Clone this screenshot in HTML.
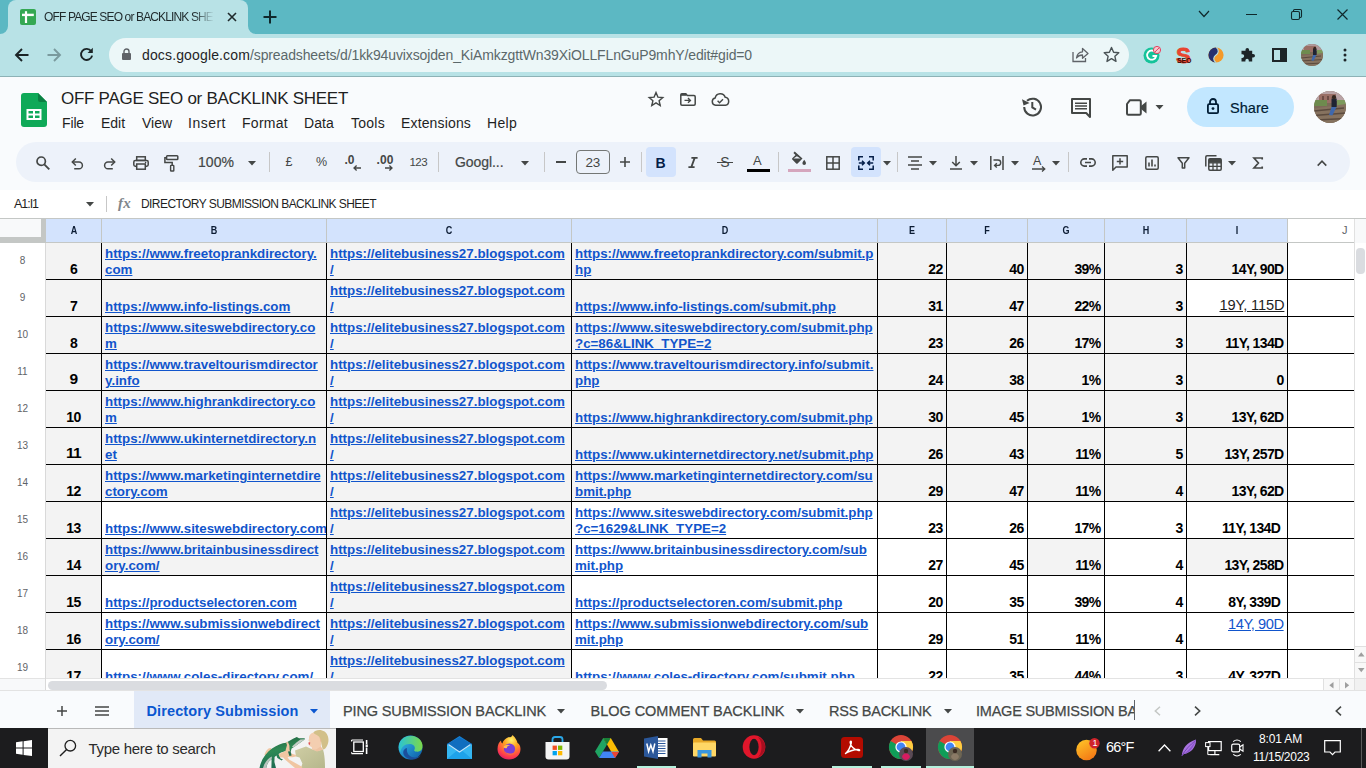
<!DOCTYPE html>
<html lang="en"><head><meta charset="utf-8"><title>OFF PAGE SEO or BACKLINK SHEET</title>
<style>
html,body{margin:0;padding:0;}
body{width:1366px;height:768px;overflow:hidden;position:relative;background:#fff;font-family:"Liberation Sans",sans-serif;}
.b{position:absolute;box-sizing:border-box;}
.t{position:absolute;white-space:pre;}
svg{overflow:visible;display:block}
.grid .c{position:absolute;height:36px;box-sizing:border-box;display:flex;align-items:flex-end;font-size:13.33px;line-height:16px;font-weight:bold;color:#000;white-space:pre;overflow:hidden;padding:0 4px 1px 3px;}
.grid .c.top{align-items:flex-start;padding-top:3px;}
.grid .ca{justify-content:center;padding-left:0;padding-right:0;font-size:14px;letter-spacing:-0.6px;padding-bottom:2px;}
.grid .cn{justify-content:flex-end;font-size:14px;letter-spacing:-0.6px;padding-right:3.4px;padding-bottom:2px;}
.grid .lk{color:#1155cc;text-decoration:underline;}
.grid .u1{font-weight:normal;font-size:14.67px;text-decoration:underline;color:#1f1f1f;letter-spacing:-0.15px;position:relative;top:-1.5px;left:0.8px;}
.grid .u2{font-weight:normal;font-size:14.67px;text-decoration:underline;color:#1155cc;letter-spacing:-0.45px;}
.grid .rn{position:absolute;left:0;width:45px;text-align:center;font-size:10px;line-height:14px;color:#5f6368;}
.grid .hb{position:absolute;left:46px;width:1308px;height:1px;background:#000;z-index:3;}
.grid .vb{position:absolute;top:0;width:1px;height:435px;background:#000;z-index:3;}
</style></head>
<body>
<!-- p_chrome -->
<div class="b" style="left:0px;top:0px;width:1366px;height:34px;background:#5cb8c3;"></div>
<div class="b" style="left:0px;top:34px;width:1366px;height:42px;background:#b8e2e6;"></div>
<div class="b" style="left:0px;top:76px;width:1366px;height:1px;background:#8db2b6;"></div>
<div class="b" style="left:8px;top:0px;width:240px;height:34px;background:#b8e2e6;border-radius:8px 8px 0 0;"></div>
<svg class="b" style="left:0px;top:26px;" width="8" height="8" viewBox="0 0 8 8"><path d="M0 8 H8 V0 A8 8 0 0 1 0 8Z" fill="#b8e2e6"/></svg>
<svg class="b" style="left:248px;top:26px;" width="8" height="8" viewBox="0 0 8 8"><path d="M8 8 H0 V0 A8 8 0 0 0 8 8Z" fill="#b8e2e6"/></svg>
<svg class="b" style="left:20px;top:9px;" width="16" height="16" viewBox="0 0 16 16"><rect x="0" y="0" width="16" height="16" rx="2" fill="#34a853"/><rect x="4.9" y="2.2" width="2.2" height="11.8" fill="#fff"/><rect x="2" y="4.7" width="11.8" height="2.4" fill="#fff"/></svg>
<div class="t " style="left:44px;top:8.5px;font-size:12px;line-height:17px;color:#1f2a2c;letter-spacing:-0.863px;-webkit-mask-image:linear-gradient(90deg,#000 150px,transparent 170px);mask-image:linear-gradient(90deg,#000 150px,transparent 170px);">OFF PAGE SEO or BACKLINK SHE</div>
<svg class="b" style="left:227px;top:12px;" width="10" height="10" viewBox="0 0 10 10"><path d="M1 1 L9 9 M9 1 L1 9" stroke="#1f2a2c" stroke-width="1.6" fill="none"/></svg>
<svg class="b" style="left:263px;top:10px;" width="14" height="14" viewBox="0 0 14 14"><path d="M7 0.5 V13.5 M0.5 7 H13.5" stroke="#10282b" stroke-width="2" fill="none"/></svg>
<svg class="b" style="left:1198px;top:10px;" width="12" height="8" viewBox="0 0 12 8"><path d="M1 1 L6 6.5 L11 1" stroke="#10282b" stroke-width="1.2" fill="none"/></svg>
<div class="b" style="left:1246px;top:14px;width:11px;height:1px;background:#10282b;"></div>
<svg class="b" style="left:1291px;top:9px;" width="11" height="11" viewBox="0 0 11 11"><rect x="0.5" y="2.5" width="8" height="8" rx="1.5" fill="none" stroke="#10282b" stroke-width="1.1"/><path d="M2.5 2.5 V1.7 Q2.5 0.5 3.7 0.5 H9.3 Q10.5 0.5 10.5 1.7 V7.3 Q10.5 8.5 9.3 8.5 H8.5" fill="none" stroke="#10282b" stroke-width="1.1"/></svg>
<svg class="b" style="left:1337px;top:9px;" width="11" height="11" viewBox="0 0 11 11"><path d="M0.5 0.5 L10.5 10.5 M10.5 0.5 L0.5 10.5" stroke="#10282b" stroke-width="1.2" fill="none"/></svg>
<svg class="b" style="left:15px;top:48px;" width="14" height="14" viewBox="0 0 14 14"><path d="M13.5 7 H1.5 M7 1 L1 7 L7 13" stroke="#1b2426" stroke-width="1.9" fill="none"/></svg>
<svg class="b" style="left:47px;top:48px;" width="14" height="14" viewBox="0 0 14 14"><path d="M0.5 7 H12.5 M7 1 L13 7 L7 13" stroke="#7a9a9e" stroke-width="1.9" fill="none"/></svg>
<svg class="b" style="left:79px;top:47px;" width="15" height="15" viewBox="0 0 15 15"><path d="M12.2 4.2 A5.6 5.6 0 1 0 13.1 8.6" stroke="#1b2426" stroke-width="1.9" fill="none"/><path d="M13.8 0.8 V6 H8.6 Z" fill="#1b2426"/></svg>
<div class="b" style="left:109px;top:38px;width:1020px;height:34px;background:#ecf7f8;border-radius:17px;"></div>
<svg class="b" style="left:122px;top:48px;" width="9" height="12" viewBox="0 0 9 12"><rect x="0" y="5" width="9" height="7" rx="1" fill="#5f6368"/><path d="M2 5.5 V3.5 A2.5 2.5 0 0 1 7 3.5 V5.5" stroke="#5f6368" stroke-width="1.4" fill="none"/></svg>
<div class="t " style="left:142px;top:45.0px;font-size:14px;line-height:20px;color:#1f2426;letter-spacing:0.144px;">docs.google.com</div>
<div class="t " style="left:250px;top:45.0px;font-size:14px;line-height:20px;color:#5b686a;letter-spacing:-0.125px;">/spreadsheets/d/1kk94uvixsojden_KiAmkzgttWn39XiOLLFLnGuP9mhY/edit#gid=0</div>
<svg class="b" style="left:1072px;top:46px;" width="17" height="17" viewBox="0 0 17 17"><path d="M1 6 V15.5 H13.5 V12" stroke="#5f6368" stroke-width="1.3" fill="none"/><path d="M4.5 12 C5 8 7.5 6 10.5 5.8 V2.5 L16 7.5 L10.5 12.3 V9 C8 9 6 9.8 4.5 12Z" stroke="#5f6368" stroke-width="1.3" fill="none" stroke-linejoin="round"/></svg>
<svg class="b" style="left:1103px;top:46px;" width="17" height="17" viewBox="0 0 17 17"><path d="M8.5 1.5 L10.6 6.3 L15.8 6.8 L11.9 10.3 L13 15.4 L8.5 12.7 L4 15.4 L5.1 10.3 L1.2 6.8 L6.4 6.3 Z" stroke="#4a5356" stroke-width="1.4" fill="none" stroke-linejoin="round"/></svg>
<svg class="b" style="left:1143px;top:46px;" width="18" height="18" viewBox="0 0 18 18"><circle cx="8.5" cy="9.5" r="8" fill="#15c39a"/><path d="M12.5 6.5 A4.6 4.6 0 1 0 13.2 10 H9.5" stroke="#fff" stroke-width="1.8" fill="none"/><circle cx="14" cy="4" r="3.6" fill="#f6c9cf" stroke="#e5405e" stroke-width="1"/><path d="M11.6 6.3 L16.3 1.7" stroke="#e5405e" stroke-width="1"/></svg>
<div class="t" style="left:1176px;top:43px;font-size:22px;line-height:26px;-webkit-text-stroke:0.8px #e8452f;font-weight:bold;color:#e8452f;letter-spacing:0">S</div>
<div class="t" style="left:1177px;top:57px;font-size:7px;line-height:8px;font-weight:bold;color:#3b0d07;letter-spacing:-0.2px">SEO</div>
<svg class="b" style="left:1208px;top:47px;" width="16" height="16" viewBox="0 0 16 16"><circle cx="8" cy="8" r="7.6" fill="#f49a2a"/><path d="M8 0.4 A7.6 7.6 0 0 0 8 15.6 C4.5 13.5 5.5 9.5 8 8 C10.5 6.5 11.5 2.5 8 0.4Z" fill="#26306e"/><path d="M8 0.4 C11.5 2.5 10.5 6.5 8 8 C5.5 9.5 4.5 13.5 8 15.6" stroke="#b8e2e6" stroke-width="1.1" fill="none"/></svg>
<svg class="b" style="left:1239px;top:47px;" width="17" height="17" viewBox="0 0 17 17"><path d="M6.5 2.8 A1.8 1.8 0 0 1 10.1 2.8 V3.8 H13.2 V7 H14.2 A1.8 1.8 0 0 1 14.2 10.6 H13.2 V14.5 H9.8 V13.4 A1.7 1.7 0 0 0 6.4 13.4 V14.5 H2.5 V10.9 H3.4 A1.8 1.8 0 0 0 3.4 7.3 H2.5 V3.8 H6.5Z" fill="#1d2528"/></svg>
<svg class="b" style="left:1272px;top:48px;" width="15" height="14" viewBox="0 0 15 14"><rect x="1" y="1" width="13" height="12" fill="none" stroke="#1d2528" stroke-width="2"/><rect x="8" y="1" width="6" height="12" fill="#1d2528"/></svg>
<svg class="b" style="left:1301px;top:44px;" width="22" height="22" viewBox="0 0 22 22"><defs><clipPath id="av1"><circle cx="11" cy="11" r="11"/></clipPath></defs><g clip-path="url(#av1)"><rect width="22" height="22" fill="#7c6a58"/><rect width="22" height="7" fill="#b0989a"/><rect x="3" y="2" width="12" height="6" fill="#9a6f66"/><rect x="0" y="6" width="9" height="4" fill="#6e8b4e"/><rect x="16" y="6" width="6" height="4" fill="#7d9a5c"/><path d="M0 12 L22 9 V22 H0Z" fill="#86725f"/><path d="M0 14 L20 12 M0 17 L22 15.5 M2 20 L22 19" stroke="#5b4a3e" stroke-width="1"/><rect x="12" y="5" width="3.6" height="6" fill="#1f2433"/><circle cx="13.8" cy="4.2" r="1.5" fill="#33261f"/><path d="M12 11 L10.4 16.5 L12.6 16.8 L15.4 11Z" fill="#3f68ad"/></g></svg>
<svg class="b" style="left:1342.5px;top:48px;" width="4" height="14" viewBox="0 0 4 14"><circle cx="2" cy="2" r="1.5" fill="#1d2528"/><circle cx="2" cy="7" r="1.5" fill="#1d2528"/><circle cx="2" cy="12" r="1.5" fill="#1d2528"/></svg>
<!-- p_header -->
<div class="b" style="left:0px;top:77px;width:1366px;height:113px;background:#f9fbfd;"></div>
<svg class="b" style="left:21px;top:93px;" width="26" height="34" viewBox="0 0 26 34"><path d="M3 0 H17 L26 9 V31 Q26 34 23 34 H3 Q0 34 0 31 V3 Q0 0 3 0Z" fill="#0fa958"/><path d="M17 0 L26 9 H19 Q17 9 17 7Z" fill="#0b8043"/><path d="M5.5 16 H20.5 V27 H5.5Z M7.5 18 V20.5 H12 V18Z M14 18 V20.5 H18.5 V18Z M7.5 22.5 V25 H12 V22.5Z M14 22.5 V25 H18.5 V22.5Z" fill="#fff" fill-rule="evenodd"/></svg>
<div class="t " style="left:61px;top:86.6px;font-size:17px;line-height:24px;color:#1f1f1f;letter-spacing:-0.279px;">OFF PAGE SEO or BACKLINK SHEET</div>
<div class="t " style="left:62px;top:113.0px;font-size:14px;line-height:20px;color:#1f1f1f;letter-spacing:-0.140px;">File</div>
<div class="t " style="left:101px;top:113.0px;font-size:14px;line-height:20px;color:#1f1f1f;letter-spacing:-0.031px;">Edit</div>
<div class="t " style="left:142px;top:113.0px;font-size:14px;line-height:20px;color:#1f1f1f;letter-spacing:-0.023px;">View</div>
<div class="t " style="left:188px;top:113.0px;font-size:14px;line-height:20px;color:#1f1f1f;letter-spacing:0.498px;">Insert</div>
<div class="t " style="left:242px;top:113.0px;font-size:14px;line-height:20px;color:#1f1f1f;letter-spacing:0.277px;">Format</div>
<div class="t " style="left:304px;top:113.0px;font-size:14px;line-height:20px;color:#1f1f1f;letter-spacing:0.107px;">Data</div>
<div class="t " style="left:351px;top:113.0px;font-size:14px;line-height:20px;color:#1f1f1f;letter-spacing:0.263px;">Tools</div>
<div class="t " style="left:401px;top:113.0px;font-size:14px;line-height:20px;color:#1f1f1f;letter-spacing:0.152px;">Extensions</div>
<div class="t " style="left:487px;top:113.0px;font-size:14px;line-height:20px;color:#1f1f1f;letter-spacing:0.302px;">Help</div>
<svg class="b" style="left:648px;top:91px;" width="16" height="16" viewBox="0 0 16 16"><path d="M8 1.6 L9.9 6.1 L14.8 6.5 L11.1 9.7 L12.2 14.5 L8 11.9 L3.8 14.5 L4.9 9.7 L1.2 6.5 L6.1 6.1 Z" stroke="#444746" stroke-width="1.4" fill="none" stroke-linejoin="miter"/></svg>
<svg class="b" style="left:680px;top:93px;" width="16" height="13" viewBox="0 0 16 13"><path d="M0.8 2 Q0.8 0.8 2 0.8 H5.8 L7.3 2.6 H14 Q15.2 2.6 15.2 3.8 V11 Q15.2 12.2 14 12.2 H2 Q0.8 12.2 0.8 11Z" stroke="#444746" stroke-width="1.5" fill="none"/><rect x="0.8" y="0.8" width="5.5" height="2" fill="#444746"/><path d="M4.5 7.4 H9.5 M8 5 L10.4 7.4 L8 9.8" stroke="#444746" stroke-width="1.4" fill="none"/></svg>
<svg class="b" style="left:711px;top:93px;" width="19" height="13" viewBox="0 0 19 13"><path d="M4.6 12.2 A3.7 3.7 0 0 1 4.2 4.9 A5.2 5.2 0 0 1 14.2 4.3 A4 4 0 0 1 14.4 12.2Z" stroke="#444746" stroke-width="1.5" fill="none"/><path d="M6.6 7.8 L8.5 9.7 L12 6.2" stroke="#444746" stroke-width="1.4" fill="none"/></svg>
<svg class="b" style="left:1021px;top:96px;" width="22" height="22" viewBox="0 0 22 22"><path d="M3.2 11 A8.4 8.4 0 1 0 6 4.8" stroke="#444746" stroke-width="2" fill="none"/><path d="M1 3.2 L2.6 9.6 L8.6 7Z" fill="#444746"/><path d="M11.3 6 V11.4 L15 13.6" stroke="#444746" stroke-width="2" fill="none"/></svg>
<svg class="b" style="left:1071px;top:98px;" width="20" height="20" viewBox="0 0 20 20"><path d="M1 1 H19 V19 L15.2 15 H1Z" stroke="#444746" stroke-width="2" fill="none" stroke-linejoin="round"/><path d="M4 5.2 H16 M4 8 H16 M4 10.8 H16" stroke="#444746" stroke-width="1.6"/></svg>
<svg class="b" style="left:1126px;top:99px;" width="21" height="17" viewBox="0 0 21 17"><path d="M4 1.2 H13.5 Q14.8 1.2 14.8 2.5 V14.5 Q14.8 15.8 13.5 15.8 H2.2 Q1 15.8 1 14.5 V5 Z" stroke="#444746" stroke-width="2" fill="none" stroke-linejoin="round"/><path d="M15 7 L20.5 2.5 V14.5 L15 10Z" fill="#444746"/></svg>
<svg class="b" style="left:1155px;top:105px;" width="9" height="5" viewBox="0 0 9 5"><path d="M0.5 0 H8.5 L4.5 4.5Z" fill="#444746"/></svg>
<div class="b" style="left:1187px;top:87px;width:107px;height:40px;background:#c2e7ff;border-radius:20px;"></div>
<svg class="b" style="left:1207px;top:98px;" width="12" height="16" viewBox="0 0 12 16"><rect x="0.9" y="6.2" width="10.2" height="8.9" rx="1.2" stroke="#001d35" stroke-width="1.8" fill="none"/><path d="M3 6 V4 A3 3 0 0 1 9 4 V6" stroke="#001d35" stroke-width="1.8" fill="none"/><circle cx="6" cy="10.6" r="1.4" fill="#001d35"/></svg>
<div class="t " style="left:1230px;top:97.5px;font-size:14.5px;line-height:20px;color:#001d35;letter-spacing:0.061px;-webkit-text-stroke:0.2px #001d35;">Share</div>
<svg class="b" style="left:1314px;top:91px;" width="32" height="32" viewBox="0 0 32 32"><defs><clipPath id="av2"><circle cx="16" cy="16" r="16"/></clipPath></defs><g clip-path="url(#av2)"><rect width="32" height="32" fill="#7c6a58"/><rect width="32" height="10" fill="#b9a3a6"/><rect x="5" y="3" width="17" height="9" fill="#9a6f66"/><rect x="8" y="5" width="2" height="4" fill="#6e4c46"/><rect x="13" y="5" width="2" height="4" fill="#6e4c46"/><rect x="0" y="9" width="13" height="6" fill="#6e8b4e"/><rect x="23" y="9" width="9" height="6" fill="#7d9a5c"/><path d="M0 17.5 L32 13 V32 H0Z" fill="#86725f"/><path d="M0 20 L30 17 M0 24.5 L32 22 M2 29 L32 27.5" stroke="#5b4a3e" stroke-width="1.4"/><rect x="17.5" y="7.5" width="5.2" height="8.6" fill="#1f2433"/><circle cx="20" cy="6.2" r="2.1" fill="#33261f"/><path d="M17.5 16 L15 24 L18.4 24.5 L22.5 16Z" fill="#3f68ad"/></g></svg>
<!-- p_toolbar -->
<div class="b" style="left:16px;top:142px;width:1334px;height:40px;background:#edf2fa;border-radius:20px;"></div>
<svg class="b" style="left:36px;top:156px;" width="14" height="14" viewBox="0 0 14 14"><circle cx="5.2" cy="5.2" r="4.2" stroke="#444746" stroke-width="1.7" fill="none"/><path d="M8.3 8.3 L13.3 13.3" stroke="#444746" stroke-width="1.9"/></svg>
<svg class="b" style="left:71px;top:157px;" width="13" height="13" viewBox="0 0 13 13"><path d="M1.5 5 H8 A3.4 3.4 0 0 1 8 11.8 H3.2" stroke="#444746" stroke-width="1.5" fill="none"/><path d="M4.8 1.5 L1.3 5 L4.8 8.5" stroke="#444746" stroke-width="1.5" fill="none"/></svg>
<svg class="b" style="left:103px;top:157px;" width="13" height="13" viewBox="0 0 13 13"><path d="M11.5 5 H5 A3.4 3.4 0 0 0 5 11.8 H9.8" stroke="#444746" stroke-width="1.5" fill="none"/><path d="M8.2 1.5 L11.7 5 L8.2 8.5" stroke="#444746" stroke-width="1.5" fill="none"/></svg>
<svg class="b" style="left:133px;top:156px;" width="16" height="14" viewBox="0 0 16 14"><rect x="3.7" y="0.8" width="8.6" height="3.6" stroke="#444746" stroke-width="1.5" fill="none"/><path d="M3.5 10.2 H2.2 Q0.8 10.2 0.8 8.8 V6 Q0.8 4.5 2.3 4.5 H13.7 Q15.2 4.5 15.2 6 V8.8 Q15.2 10.2 13.8 10.2 H12.5" stroke="#444746" stroke-width="1.5" fill="none"/><rect x="3.7" y="8" width="8.6" height="5.2" stroke="#444746" stroke-width="1.5" fill="none"/><circle cx="12.6" cy="6.6" r="0.8" fill="#444746"/></svg>
<svg class="b" style="left:164px;top:155px;" width="15" height="17" viewBox="0 0 15 17"><rect x="2.6" y="0.8" width="11.2" height="3.8" rx="0.8" stroke="#444746" stroke-width="1.5" fill="none"/><path d="M2.6 2.7 H0.9 V7.6 H8.2 V10.4" stroke="#444746" stroke-width="1.5" fill="none"/><rect x="6.6" y="10.4" width="3.2" height="5.6" rx="0.6" stroke="#444746" stroke-width="1.4" fill="none"/></svg>
<div class="t " style="left:198px;top:152.0px;font-size:14px;line-height:20px;color:#444746;letter-spacing:0.048px;-webkit-text-stroke:0.2px #444746;">100%</div>
<svg class="b" style="left:248px;top:161px;" width="8" height="4.5" viewBox="0 0 8 4.5"><path d="M0 0 H8 L4 4.5Z" fill="#444746"/></svg>
<div class="b" style="left:269px;top:152px;width:1px;height:20px;background:#c7c7c7;"></div>
<div class="t " style="left:285.5px;top:152.5px;font-size:12.5px;line-height:18px;color:#444746;letter-spacing:-0.452px;">£</div>
<div class="t " style="left:316px;top:152.5px;font-size:12.5px;line-height:18px;color:#444746;letter-spacing:-0.114px;">%</div>
<div class="t " style="left:344.5px;top:152.0px;font-size:12px;line-height:17px;color:#444746;letter-spacing:-0.004px;font-weight:bold;">.0</div>
<svg class="b" style="left:353px;top:165px;" width="8" height="6" viewBox="0 0 8 6"><path d="M8 3 H1.2 M3.6 0.5 L1 3 L3.6 5.5" stroke="#444746" stroke-width="1.3" fill="none"/></svg>
<div class="t " style="left:376.5px;top:152.0px;font-size:12px;line-height:17px;color:#444746;letter-spacing:0.106px;font-weight:bold;">.00</div>
<svg class="b" style="left:385px;top:165px;" width="8" height="6" viewBox="0 0 8 6"><path d="M0 3 H6.8 M4.4 0.5 L7 3 L4.4 5.5" stroke="#444746" stroke-width="1.3" fill="none"/></svg>
<div class="t " style="left:409.5px;top:154.0px;font-size:11.5px;line-height:16px;color:#444746;letter-spacing:-0.562px;">123</div>
<div class="b" style="left:438px;top:152px;width:1px;height:20px;background:#c7c7c7;"></div>
<div class="t " style="left:455px;top:151.5px;font-size:14px;line-height:20px;color:#444746;letter-spacing:-0.066px;-webkit-text-stroke:0.2px #444746;">Googl...</div>
<svg class="b" style="left:521px;top:161px;" width="8" height="4.5" viewBox="0 0 8 4.5"><path d="M0 0 H8 L4 4.5Z" fill="#444746"/></svg>
<div class="b" style="left:544px;top:152px;width:1px;height:20px;background:#c7c7c7;"></div>
<div class="b" style="left:556px;top:161px;width:10px;height:1.6px;background:#444746;"></div>
<div class="b" style="left:576px;top:150px;width:34px;height:24px;border:1px solid #747775;border-radius:4px;"></div>
<div class="t " style="left:585.5px;top:152.5px;font-size:13.5px;line-height:19px;color:#444746;letter-spacing:-0.258px;">23</div>
<svg class="b" style="left:620px;top:157px;" width="10" height="10" viewBox="0 0 10 10"><path d="M5 0 V10 M0 5 H10" stroke="#444746" stroke-width="1.6"/></svg>
<div class="b" style="left:641px;top:152px;width:1px;height:20px;background:#c7c7c7;"></div>
<div class="b" style="left:646px;top:147px;width:30px;height:30px;background:#d3e3fd;border-radius:4px;"></div>
<div class="t " style="left:655.5px;top:152.5px;font-size:14px;line-height:20px;color:#041e49;letter-spacing:-0.610px;font-weight:bold;">B</div>
<svg class="b" style="left:688px;top:157px;" width="10" height="11" viewBox="0 0 10 11"><path d="M3.4 0.9 H9.6 M0.4 10.1 H6.6 M6.7 0.9 L3.3 10.1" stroke="#444746" stroke-width="1.8" fill="none"/></svg>
<div class="t " style="left:720.3px;top:152.3px;font-size:14px;line-height:20px;color:#444746;letter-spacing:-0.038px;">S</div>
<div class="b" style="left:717px;top:161.5px;width:16px;height:1.5px;background:#444746;"></div>
<div class="t " style="left:753px;top:151.5px;font-size:13px;line-height:18px;color:#444746;letter-spacing:0.929px;">A</div>
<div class="b" style="left:747px;top:168.5px;width:23px;height:3.2px;background:#000;"></div>
<div class="b" style="left:778px;top:152px;width:1px;height:20px;background:#c7c7c7;"></div>
<svg class="b" style="left:791px;top:150px;" width="16" height="16" viewBox="0 0 16 16"><path d="M3.2 2.6 L1.9 3.9 L4 6 L0.8 9.2 Q0.2 9.9 0.8 10.6 L4.7 14.5 Q5.4 15.1 6.1 14.5 L11 9.6 Z M5.4 7.2 L9 9.6 H1.9Z" fill="#444746" fill-rule="evenodd" transform="translate(0.5,-1)"/><path d="M13.2 9.8 Q15 12.2 15 13.2 A1.8 1.8 0 0 1 11.4 13.2 Q11.4 12.2 13.2 9.8Z" fill="#444746"/></svg>
<div class="b" style="left:788px;top:168.5px;width:23px;height:3.2px;background:#d5a6bd;"></div>
<svg class="b" style="left:826px;top:156px;" width="14" height="14" viewBox="0 0 14 14"><rect x="0.8" y="0.8" width="12.4" height="12.4" stroke="#444746" stroke-width="1.5" fill="none"/><path d="M7 0.8 V13.2 M0.8 7 H13.2" stroke="#444746" stroke-width="1.5"/></svg>
<div class="b" style="left:851px;top:147px;width:30px;height:30px;background:#d3e3fd;border-radius:4px;"></div>
<svg class="b" style="left:858px;top:156px;" width="16" height="14" viewBox="0 0 16 14"><path d="M5 0.8 H0.8 V4.6 M0.8 9.4 V13.2 H5 M11 0.8 H15.2 V4.6 M15.2 9.4 V13.2 H11" stroke="#041e49" stroke-width="1.5" fill="none"/><path d="M0.8 7 H6 M4 4.7 L6.3 7 L4 9.3 M15.2 7 H10 M12 4.7 L9.7 7 L12 9.3" stroke="#041e49" stroke-width="1.5" fill="none"/></svg>
<svg class="b" style="left:883px;top:161px;" width="8" height="4.5" viewBox="0 0 8 4.5"><path d="M0 0 H8 L4 4.5Z" fill="#444746"/></svg>
<div class="b" style="left:897px;top:152px;width:1px;height:20px;background:#c7c7c7;"></div>
<svg class="b" style="left:908px;top:156px;" width="14" height="14" viewBox="0 0 14 14"><path d="M0 1 H14 M3 5 H11 M0 9 H14 M3 13 H11" stroke="#444746" stroke-width="1.5"/></svg>
<svg class="b" style="left:929px;top:161px;" width="8" height="4.5" viewBox="0 0 8 4.5"><path d="M0 0 H8 L4 4.5Z" fill="#444746"/></svg>
<svg class="b" style="left:950px;top:156px;" width="12" height="14" viewBox="0 0 12 14"><path d="M0 13 H12 M6 0 V9.5 M2.2 6 L6 9.8 L9.8 6" stroke="#444746" stroke-width="1.5" fill="none"/></svg>
<svg class="b" style="left:970px;top:161px;" width="8" height="4.5" viewBox="0 0 8 4.5"><path d="M0 0 H8 L4 4.5Z" fill="#444746"/></svg>
<svg class="b" style="left:990px;top:156px;" width="14" height="14" viewBox="0 0 14 14"><path d="M0.8 0 V14 M13 0 V14" stroke="#444746" stroke-width="1.5"/><path d="M3.5 4 H8 A2.6 2.6 0 0 1 8 9.4 H5 M6.8 7.2 L4.6 9.4 L6.8 11.6" stroke="#444746" stroke-width="1.4" fill="none"/></svg>
<svg class="b" style="left:1011px;top:161px;" width="8" height="4.5" viewBox="0 0 8 4.5"><path d="M0 0 H8 L4 4.5Z" fill="#444746"/></svg>
<div class="t " style="left:1033px;top:151.5px;font-size:12.5px;line-height:18px;color:#444746;letter-spacing:0.662px;">A</div>
<svg class="b" style="left:1032px;top:166px;" width="14" height="6" viewBox="0 0 14 6"><path d="M0 3 H12.5 M10 0.4 L12.8 3 L10 5.6" stroke="#444746" stroke-width="1.3" fill="none"/></svg>
<svg class="b" style="left:1052px;top:161px;" width="8" height="4.5" viewBox="0 0 8 4.5"><path d="M0 0 H8 L4 4.5Z" fill="#444746"/></svg>
<div class="b" style="left:1068px;top:152px;width:1px;height:20px;background:#c7c7c7;"></div>
<svg class="b" style="left:1080px;top:158px;" width="16" height="9" viewBox="0 0 16 9"><path d="M7 0.9 H4.4 A3.6 3.6 0 0 0 4.4 8.1 H7 M9 0.9 H11.6 A3.6 3.6 0 0 1 11.6 8.1 H9 M5 4.5 H11" stroke="#444746" stroke-width="1.6" fill="none"/></svg>
<svg class="b" style="left:1112px;top:155px;" width="16" height="16" viewBox="0 0 16 16"><path d="M0.8 0.8 H15.2 V12 H4 L0.8 15.2Z" stroke="#444746" stroke-width="1.5" fill="none" stroke-linejoin="round"/><path d="M8 3.2 V9.6 M4.8 6.4 H11.2" stroke="#444746" stroke-width="1.5"/></svg>
<svg class="b" style="left:1145px;top:156px;" width="14" height="14" viewBox="0 0 14 14"><rect x="0.8" y="0.8" width="12.4" height="12.4" rx="1.2" stroke="#444746" stroke-width="1.5" fill="none"/><path d="M4 10.5 V6.5 M7 10.5 V3.6 M10 10.5 V8.6" stroke="#444746" stroke-width="1.6"/></svg>
<svg class="b" style="left:1177px;top:157px;" width="13" height="12" viewBox="0 0 13 12"><path d="M1 0.8 H12 L7.7 6.2 V11 H5.3 V6.2Z" stroke="#444746" stroke-width="1.5" fill="none" stroke-linejoin="round"/></svg>
<svg class="b" style="left:1205px;top:155px;" width="17" height="16" viewBox="0 0 17 16"><path d="M0.8 11.5 V2 Q0.8 0.8 2 0.8 H11.5" stroke="#444746" stroke-width="1.5" fill="none"/><rect x="3.8" y="3.8" width="12.4" height="11.4" rx="1.2" stroke="#444746" stroke-width="1.5" fill="none"/><path d="M3.8 7.8 H16.2 M3.8 11.4 H16.2 M8 7.8 V15.2 M12 7.8 V15.2" stroke="#444746" stroke-width="1.3"/><rect x="3.8" y="3.8" width="12.4" height="4" fill="#444746"/></svg>
<svg class="b" style="left:1228px;top:161px;" width="8" height="4.5" viewBox="0 0 8 4.5"><path d="M0 0 H8 L4 4.5Z" fill="#444746"/></svg>
<svg class="b" style="left:1253px;top:157px;" width="10" height="12" viewBox="0 0 10 12"><path d="M9.2 2.6 V1 H1 L5.4 6 L1 11 H9.2 V9.4" stroke="#444746" stroke-width="1.7" fill="none" stroke-linejoin="miter"/></svg>
<svg class="b" style="left:1317px;top:160px;" width="10" height="6" viewBox="0 0 10 6"><path d="M0.7 5.6 L5 1.2 L9.3 5.6" stroke="#444746" stroke-width="1.6" fill="none"/></svg>
<div class="b" style="left:0px;top:190px;width:1366px;height:28px;background:#fff;"></div>
<div class="t " style="left:14px;top:195.0px;font-size:12.5px;line-height:18px;color:#1f1f1f;letter-spacing:-1.037px;">A1:I1</div>
<svg class="b" style="left:86px;top:202px;" width="8" height="4.5" viewBox="0 0 8 4.5"><path d="M0 0 H8 L4 4.5Z" fill="#444746"/></svg>
<div class="b" style="left:106px;top:196px;width:1px;height:16px;background:#c7c7c7;"></div>
<div class="t " style="left:118px;top:193.0px;font-size:15px;line-height:21px;color:#80868b;letter-spacing:0.331px;font-weight:bold;font-style:italic;font-family:'Liberation Serif',serif;">fx</div>
<div class="t " style="left:141px;top:195.5px;font-size:12px;line-height:17px;color:#1f1f1f;letter-spacing:-0.564px;">DIRECTORY SUBMISSION BACKLINK SHEET</div>
<!-- p_grid -->
<div class="b" style="left:0px;top:218px;width:1366px;height:1px;background:#c4c7c5;"></div>
<div class="b" style="left:0px;top:219px;width:1355px;height:23px;background:#fff;"></div>
<div class="b" style="left:46px;top:219px;width:1242px;height:23px;background:#d3e3fd;"></div>
<div class="b" style="left:0px;top:242px;width:1355px;height:1px;background:#c4c7c5;"></div>
<div class="b" style="left:0px;top:219px;width:41px;height:18px;background:#f8f9fa;"></div>
<div class="b" style="left:41px;top:219px;width:5px;height:24px;background:#c4c7c5;"></div>
<div class="b" style="left:0px;top:237px;width:46px;height:5px;background:#c4c7c5;"></div>
<div class="t " style="left:-126.5px;width:400px;text-align:center;top:222.8px;font-size:10.5px;line-height:15px;color:#0b1b33;font-weight:bold;transform:scaleX(0.86);">A</div>
<div class="b" style="left:101px;top:219px;width:1px;height:23px;background:#c4c7c5;"></div>
<div class="t " style="left:14.0px;width:400px;text-align:center;top:222.8px;font-size:10.5px;line-height:15px;color:#0b1b33;font-weight:bold;transform:scaleX(0.86);">B</div>
<div class="b" style="left:326px;top:219px;width:1px;height:23px;background:#c4c7c5;"></div>
<div class="t " style="left:249.0px;width:400px;text-align:center;top:222.8px;font-size:10.5px;line-height:15px;color:#0b1b33;font-weight:bold;transform:scaleX(0.86);">C</div>
<div class="b" style="left:571px;top:219px;width:1px;height:23px;background:#c4c7c5;"></div>
<div class="t " style="left:524.5px;width:400px;text-align:center;top:222.8px;font-size:10.5px;line-height:15px;color:#0b1b33;font-weight:bold;transform:scaleX(0.86);">D</div>
<div class="b" style="left:877px;top:219px;width:1px;height:23px;background:#c4c7c5;"></div>
<div class="t " style="left:712.0px;width:400px;text-align:center;top:222.8px;font-size:10.5px;line-height:15px;color:#0b1b33;font-weight:bold;transform:scaleX(0.86);">E</div>
<div class="b" style="left:946px;top:219px;width:1px;height:23px;background:#c4c7c5;"></div>
<div class="t " style="left:787.0px;width:400px;text-align:center;top:222.8px;font-size:10.5px;line-height:15px;color:#0b1b33;font-weight:bold;transform:scaleX(0.86);">F</div>
<div class="b" style="left:1027px;top:219px;width:1px;height:23px;background:#c4c7c5;"></div>
<div class="t " style="left:866.0px;width:400px;text-align:center;top:222.8px;font-size:10.5px;line-height:15px;color:#0b1b33;font-weight:bold;transform:scaleX(0.86);">G</div>
<div class="b" style="left:1104px;top:219px;width:1px;height:23px;background:#c4c7c5;"></div>
<div class="t " style="left:945.5px;width:400px;text-align:center;top:222.8px;font-size:10.5px;line-height:15px;color:#0b1b33;font-weight:bold;transform:scaleX(0.86);">H</div>
<div class="b" style="left:1186px;top:219px;width:1px;height:23px;background:#c4c7c5;"></div>
<div class="t " style="left:1037.0px;width:400px;text-align:center;top:222.8px;font-size:10.5px;line-height:15px;color:#0b1b33;font-weight:bold;transform:scaleX(0.86);">I</div>
<div class="b" style="left:1287px;top:219px;width:1px;height:23px;background:#c4c7c5;"></div>
<div class="t " style="left:1342px;top:222.5px;font-size:11px;line-height:15px;color:#5f6368;">J</div>
<div class="b" style="left:1354px;top:219px;width:1px;height:24px;background:#e1e1e1;"></div>
<div class="b" style="left:1355px;top:219px;width:11px;height:24px;background:#f8f9fa;"></div>
<div class="b" style="left:0px;top:243px;width:45px;height:435px;background:#fff;"></div>
<div class="b" style="left:45px;top:243px;width:1px;height:435px;background:#d9d9d9;"></div>
<div class="b grid" style="left:0;top:243px;width:1355px;height:435px;overflow:hidden;">
<div class="rn" style="top:10.5px">8</div>
<div class="c ca" style="left:46px;top:0px;width:55px;background:#f3f3f3"><span style="font-size:14.0px">6</span></div>
<div class="c cl" style="left:102px;top:0px;width:224px;background:#f3f3f3"><span class="lk">https://www.freetoprankdirectory.<br>com</span></div>
<div class="c cl" style="left:327px;top:0px;width:244px;background:#f3f3f3"><span class="lk">https://elitebusiness27.blogspot.com<br>/</span></div>
<div class="c cl" style="left:572px;top:0px;width:305px;background:#f3f3f3"><span class="lk">https://www.freetoprankdirectory.com/submit.p<br>hp</span></div>
<div class="c cn" style="left:878px;top:0px;width:68px;background:#f3f3f3"><span>22</span></div>
<div class="c cn" style="left:947px;top:0px;width:80px;background:#f3f3f3"><span>40</span></div>
<div class="c cn" style="left:1028px;top:0px;width:76px;background:#f3f3f3"><span>39%</span></div>
<div class="c cn" style="left:1105px;top:0px;width:81px;background:#f3f3f3"><span>3</span></div>
<div class="c cn" style="left:1187px;top:0px;width:100px;background:#f3f3f3"><span>14Y, 90D</span></div>
<div class="hb" style="top:36px"></div>
<div class="rn" style="top:47.5px">9</div>
<div class="c ca" style="left:46px;top:37px;width:55px;background:#f3f3f3"><span style="font-size:14.0px">7</span></div>
<div class="c cl" style="left:102px;top:37px;width:224px;background:#f3f3f3"><span class="lk">https://www.info-listings.com</span></div>
<div class="c cl" style="left:327px;top:37px;width:244px;background:#f3f3f3"><span class="lk">https://elitebusiness27.blogspot.com<br>/</span></div>
<div class="c cl" style="left:572px;top:37px;width:305px;background:#f3f3f3"><span class="lk">https://www.info-listings.com/submit.php</span></div>
<div class="c cn" style="left:878px;top:37px;width:68px;background:#f3f3f3"><span>31</span></div>
<div class="c cn" style="left:947px;top:37px;width:80px;background:#f3f3f3"><span>47</span></div>
<div class="c cn" style="left:1028px;top:37px;width:76px;background:#f3f3f3"><span>22%</span></div>
<div class="c cn" style="left:1105px;top:37px;width:81px;background:#f3f3f3"><span>3</span></div>
<div class="c cn" style="left:1187px;top:37px;width:100px;background:#fff"><span class="u1">19Y, 115D</span></div>
<div class="hb" style="top:73px"></div>
<div class="rn" style="top:84.5px">10</div>
<div class="c ca" style="left:46px;top:74px;width:55px;background:#f3f3f3"><span style="font-size:14.0px">8</span></div>
<div class="c cl" style="left:102px;top:74px;width:224px;background:#f3f3f3"><span class="lk">https://www.siteswebdirectory.co<br>m</span></div>
<div class="c cl" style="left:327px;top:74px;width:244px;background:#f3f3f3"><span class="lk">https://elitebusiness27.blogspot.com<br>/</span></div>
<div class="c cl" style="left:572px;top:74px;width:305px;background:#f3f3f3"><span class="lk">https://www.siteswebdirectory.com/submit.php<br>?c=86&amp;LINK_TYPE=2</span></div>
<div class="c cn" style="left:878px;top:74px;width:68px;background:#f3f3f3"><span>23</span></div>
<div class="c cn" style="left:947px;top:74px;width:80px;background:#f3f3f3"><span>26</span></div>
<div class="c cn" style="left:1028px;top:74px;width:76px;background:#f3f3f3"><span>17%</span></div>
<div class="c cn" style="left:1105px;top:74px;width:81px;background:#f3f3f3"><span>3</span></div>
<div class="c cn" style="left:1187px;top:74px;width:100px;background:#f3f3f3"><span>11Y, 134D</span></div>
<div class="hb" style="top:110px"></div>
<div class="rn" style="top:121.5px">11</div>
<div class="c ca" style="left:46px;top:111px;width:55px;background:#f3f3f3"><span style="font-size:15.5px;position:relative;top:-1px">9</span></div>
<div class="c cl" style="left:102px;top:111px;width:224px;background:#f3f3f3"><span class="lk">https://www.traveltourismdirector<br>y.info</span></div>
<div class="c cl" style="left:327px;top:111px;width:244px;background:#f3f3f3"><span class="lk">https://elitebusiness27.blogspot.com<br>/</span></div>
<div class="c cl" style="left:572px;top:111px;width:305px;background:#f3f3f3"><span class="lk">https://www.traveltourismdirectory.info/submit.<br>php</span></div>
<div class="c cn" style="left:878px;top:111px;width:68px;background:#f3f3f3"><span>24</span></div>
<div class="c cn" style="left:947px;top:111px;width:80px;background:#f3f3f3"><span>38</span></div>
<div class="c cn" style="left:1028px;top:111px;width:76px;background:#f3f3f3"><span>1%</span></div>
<div class="c cn" style="left:1105px;top:111px;width:81px;background:#f3f3f3"><span>3</span></div>
<div class="c cn" style="left:1187px;top:111px;width:100px;background:#f3f3f3"><span>0</span></div>
<div class="hb" style="top:147px"></div>
<div class="rn" style="top:158.5px">12</div>
<div class="c ca" style="left:46px;top:148px;width:55px;background:#f3f3f3"><span style="font-size:14.0px">10</span></div>
<div class="c cl" style="left:102px;top:148px;width:224px;background:#f3f3f3"><span class="lk">https://www.highrankdirectory.co<br>m</span></div>
<div class="c cl" style="left:327px;top:148px;width:244px;background:#f3f3f3"><span class="lk">https://elitebusiness27.blogspot.com<br>/</span></div>
<div class="c cl" style="left:572px;top:148px;width:305px;background:#f3f3f3"><span class="lk">https://www.highrankdirectory.com/submit.php</span></div>
<div class="c cn" style="left:878px;top:148px;width:68px;background:#f3f3f3"><span>30</span></div>
<div class="c cn" style="left:947px;top:148px;width:80px;background:#f3f3f3"><span>45</span></div>
<div class="c cn" style="left:1028px;top:148px;width:76px;background:#f3f3f3"><span>1%</span></div>
<div class="c cn" style="left:1105px;top:148px;width:81px;background:#f3f3f3"><span>3</span></div>
<div class="c cn" style="left:1187px;top:148px;width:100px;background:#f3f3f3"><span>13Y, 62D</span></div>
<div class="hb" style="top:184px"></div>
<div class="rn" style="top:195.5px">13</div>
<div class="c ca" style="left:46px;top:185px;width:55px;background:#f3f3f3"><span style="font-size:15.5px;position:relative;top:-1px">11</span></div>
<div class="c cl" style="left:102px;top:185px;width:224px;background:#f3f3f3"><span class="lk">https://www.ukinternetdirectory.n<br>et</span></div>
<div class="c cl" style="left:327px;top:185px;width:244px;background:#f3f3f3"><span class="lk">https://elitebusiness27.blogspot.com<br>/</span></div>
<div class="c cl" style="left:572px;top:185px;width:305px;background:#f3f3f3"><span class="lk">https://www.ukinternetdirectory.net/submit.php</span></div>
<div class="c cn" style="left:878px;top:185px;width:68px;background:#f3f3f3"><span>26</span></div>
<div class="c cn" style="left:947px;top:185px;width:80px;background:#f3f3f3"><span>43</span></div>
<div class="c cn" style="left:1028px;top:185px;width:76px;background:#f3f3f3"><span>11%</span></div>
<div class="c cn" style="left:1105px;top:185px;width:81px;background:#f3f3f3"><span>5</span></div>
<div class="c cn" style="left:1187px;top:185px;width:100px;background:#f3f3f3"><span>13Y, 257D</span></div>
<div class="hb" style="top:221px"></div>
<div class="rn" style="top:232.5px">14</div>
<div class="c ca" style="left:46px;top:222px;width:55px;background:#f3f3f3"><span style="font-size:14.0px">12</span></div>
<div class="c cl" style="left:102px;top:222px;width:224px;background:#f3f3f3"><span class="lk">https://www.marketinginternetdire<br>ctory.com</span></div>
<div class="c cl" style="left:327px;top:222px;width:244px;background:#f3f3f3"><span class="lk">https://elitebusiness27.blogspot.com<br>/</span></div>
<div class="c cl" style="left:572px;top:222px;width:305px;background:#f3f3f3"><span class="lk">https://www.marketinginternetdirectory.com/su<br>bmit.php</span></div>
<div class="c cn" style="left:878px;top:222px;width:68px;background:#f3f3f3"><span>29</span></div>
<div class="c cn" style="left:947px;top:222px;width:80px;background:#f3f3f3"><span>47</span></div>
<div class="c cn" style="left:1028px;top:222px;width:76px;background:#f3f3f3"><span>11%</span></div>
<div class="c cn" style="left:1105px;top:222px;width:81px;background:#f3f3f3"><span>4</span></div>
<div class="c cn" style="left:1187px;top:222px;width:100px;background:#f3f3f3"><span>13Y, 62D</span></div>
<div class="hb" style="top:258px"></div>
<div class="rn" style="top:269.5px">15</div>
<div class="c ca" style="left:46px;top:259px;width:55px;background:#f3f3f3"><span style="font-size:14.0px">13</span></div>
<div class="c cl" style="left:102px;top:259px;width:224px;background:#fff;overflow:visible;z-index:2"><span class="lk">https://www.siteswebdirectory.com</span></div>
<div class="c cl" style="left:327px;top:259px;width:244px;background:#f3f3f3"><span class="lk">https://elitebusiness27.blogspot.com<br>/</span></div>
<div class="c cl" style="left:572px;top:259px;width:305px;background:#fff"><span class="lk">https://www.siteswebdirectory.com/submit.php<br>?c=1629&amp;LINK_TYPE=2</span></div>
<div class="c cn" style="left:878px;top:259px;width:68px;background:#fff"><span>23</span></div>
<div class="c cn" style="left:947px;top:259px;width:80px;background:#fff"><span>26</span></div>
<div class="c cn" style="left:1028px;top:259px;width:76px;background:#fff"><span>17%</span></div>
<div class="c cn" style="left:1105px;top:259px;width:81px;background:#fff"><span>3</span></div>
<div class="c cn" style="left:1187px;top:259px;width:100px;background:#fff"><span>11Y, 134D </span></div>
<div class="hb" style="top:295px"></div>
<div class="rn" style="top:306.5px">16</div>
<div class="c ca" style="left:46px;top:296px;width:55px;background:#f3f3f3"><span style="font-size:14.0px">14</span></div>
<div class="c cl" style="left:102px;top:296px;width:224px;background:#f3f3f3"><span class="lk">https://www.britainbusinessdirect<br>ory.com/</span></div>
<div class="c cl" style="left:327px;top:296px;width:244px;background:#f3f3f3"><span class="lk">https://elitebusiness27.blogspot.com<br>/</span></div>
<div class="c cl" style="left:572px;top:296px;width:305px;background:#fff"><span class="lk">https://www.britainbusinessdirectory.com/sub<br>mit.php</span></div>
<div class="c cn" style="left:878px;top:296px;width:68px;background:#fff"><span>27</span></div>
<div class="c cn" style="left:947px;top:296px;width:80px;background:#fff"><span>45</span></div>
<div class="c cn" style="left:1028px;top:296px;width:76px;background:#f3f3f3"><span>11%</span></div>
<div class="c cn" style="left:1105px;top:296px;width:81px;background:#fff"><span>4</span></div>
<div class="c cn" style="left:1187px;top:296px;width:100px;background:#f3f3f3"><span>13Y, 258D</span></div>
<div class="hb" style="top:332px"></div>
<div class="rn" style="top:343.5px">17</div>
<div class="c ca" style="left:46px;top:333px;width:55px;background:#f3f3f3"><span style="font-size:14.0px">15</span></div>
<div class="c cl" style="left:102px;top:333px;width:224px;background:#fff"><span class="lk">https://productselectoren.com</span></div>
<div class="c cl" style="left:327px;top:333px;width:244px;background:#f3f3f3"><span class="lk">https://elitebusiness27.blogspot.com<br>/</span></div>
<div class="c cl" style="left:572px;top:333px;width:305px;background:#fff"><span class="lk">https://productselectoren.com/submit.php</span></div>
<div class="c cn" style="left:878px;top:333px;width:68px;background:#fff"><span>20</span></div>
<div class="c cn" style="left:947px;top:333px;width:80px;background:#fff"><span>35</span></div>
<div class="c cn" style="left:1028px;top:333px;width:76px;background:#fff"><span>39%</span></div>
<div class="c cn" style="left:1105px;top:333px;width:81px;background:#fff"><span>4</span></div>
<div class="c cn" style="left:1187px;top:333px;width:100px;background:#fff"><span>8Y, 339D </span></div>
<div class="hb" style="top:369px"></div>
<div class="rn" style="top:380.5px">18</div>
<div class="c ca" style="left:46px;top:370px;width:55px;background:#f3f3f3"><span style="font-size:14.0px">16</span></div>
<div class="c cl" style="left:102px;top:370px;width:224px;background:#fff"><span class="lk">https://www.submissionwebdirect<br>ory.com/</span></div>
<div class="c cl" style="left:327px;top:370px;width:244px;background:#f3f3f3"><span class="lk">https://elitebusiness27.blogspot.com<br>/</span></div>
<div class="c cl" style="left:572px;top:370px;width:305px;background:#fff"><span class="lk">https://www.submissionwebdirectory.com/sub<br>mit.php</span></div>
<div class="c cn" style="left:878px;top:370px;width:68px;background:#fff"><span>29</span></div>
<div class="c cn" style="left:947px;top:370px;width:80px;background:#fff"><span>51</span></div>
<div class="c cn" style="left:1028px;top:370px;width:76px;background:#fff"><span>11%</span></div>
<div class="c cn" style="left:1105px;top:370px;width:81px;background:#fff"><span>4</span></div>
<div class="c cn top" style="left:1187px;top:370px;width:100px;background:#fff"><span class="u2">14Y, 90D</span></div>
<div class="hb" style="top:406px"></div>
<div class="rn" style="top:417.5px">19</div>
<div class="c ca" style="left:46px;top:407px;width:55px;background:#f3f3f3"><span style="font-size:14.0px">17</span></div>
<div class="c cl" style="left:102px;top:407px;width:224px;background:#fff"><span class="lk">https://www.coles-directory.com/</span></div>
<div class="c cl" style="left:327px;top:407px;width:244px;background:#f3f3f3"><span class="lk">https://elitebusiness27.blogspot.com<br>/</span></div>
<div class="c cl" style="left:572px;top:407px;width:305px;background:#fff"><span class="lk">https://www.coles-directory.com/submit.php</span></div>
<div class="c cn" style="left:878px;top:407px;width:68px;background:#fff"><span>22</span></div>
<div class="c cn" style="left:947px;top:407px;width:80px;background:#fff"><span>35</span></div>
<div class="c cn" style="left:1028px;top:407px;width:76px;background:#fff"><span>44%</span></div>
<div class="c cn" style="left:1105px;top:407px;width:81px;background:#fff"><span>3</span></div>
<div class="c cn" style="left:1187px;top:407px;width:100px;background:#fff"><span>4Y, 327D </span></div>
<div class="hb" style="top:443px"></div>
<div class="vb" style="left:101px"></div>
<div class="vb" style="left:326px"></div>
<div class="vb" style="left:571px"></div>
<div class="vb" style="left:877px"></div>
<div class="vb" style="left:946px"></div>
<div class="vb" style="left:1027px"></div>
<div class="vb" style="left:1104px"></div>
<div class="vb" style="left:1186px"></div>
<div class="vb" style="left:1287px"></div>
</div>
<div class="b" style="left:1354px;top:243px;width:12px;height:404px;background:#fff;border-left:1px solid #e0e0e0;"></div>
<div class="b" style="left:1356px;top:248px;width:8.5px;height:26px;background:#dadce0;border-radius:4px;"></div>
<!-- p_bottom -->
<div class="b" style="left:0px;top:678px;width:1366px;height:1px;background:#e3e3e3;"></div>
<div class="b" style="left:0px;top:679px;width:1366px;height:12px;background:#fff;"></div>
<div class="b" style="left:0px;top:679px;width:45px;height:12px;background:#f8f9fa;"></div>
<div class="b" style="left:45px;top:678px;width:1px;height:13px;background:#d9d9d9;"></div>
<div class="b" style="left:48px;top:680.5px;width:559px;height:9px;background:#dadce0;border-radius:4.5px;"></div>
<div class="b" style="left:1323px;top:679px;width:31px;height:11px;background:#f8f8f8;border-left:1px solid #e0e0e0;"></div>
<div class="b" style="left:1339px;top:679px;width:1px;height:11px;background:#e0e0e0;"></div>
<svg class="b" style="left:1328.5px;top:681.5px;" width="4.5" height="6.5" viewBox="0 0 4.5 6.5"><path d="M4.5 0 V6.5 L0.3 3.25Z" fill="#9e9e9e"/></svg>
<svg class="b" style="left:1345.2px;top:681.5px;" width="4.5" height="6.5" viewBox="0 0 4.5 6.5"><path d="M0 0 V6.5 L4.2 3.25Z" fill="#9e9e9e"/></svg>
<div class="b" style="left:1354px;top:646px;width:12px;height:32px;background:#f8f8f8;border-top:1px solid #e0e0e0;border-left:1px solid #e0e0e0;"></div>
<div class="b" style="left:1354px;top:662px;width:12px;height:1px;background:#e0e0e0;"></div>
<svg class="b" style="left:1357.5px;top:651.5px;" width="6.5" height="4.5" viewBox="0 0 6.5 4.5"><path d="M0 4.5 H6.5 L3.25 0.3Z" fill="#9e9e9e"/></svg>
<svg class="b" style="left:1357.5px;top:668px;" width="6.5" height="4.5" viewBox="0 0 6.5 4.5"><path d="M0 0 H6.5 L3.25 4.2Z" fill="#9e9e9e"/></svg>
<div class="b" style="left:1354px;top:679px;width:12px;height:11px;background:#f1f1f1;border-left:1px solid #e0e0e0;"></div>
<div class="b" style="left:0px;top:690px;width:1366px;height:1px;background:#e3e3e3;"></div>
<div class="b" style="left:0px;top:691px;width:1366px;height:37px;background:#f9fbfd;"></div>
<svg class="b" style="left:57px;top:706px;" width="10" height="10" viewBox="0 0 10 10"><path d="M5 0 V10 M0 5 H10" stroke="#444746" stroke-width="1.5"/></svg>
<svg class="b" style="left:95px;top:706px;" width="14" height="10" viewBox="0 0 14 10"><path d="M0 1 H14 M0 5 H14 M0 9 H14" stroke="#444746" stroke-width="1.5"/></svg>
<div class="b" style="left:134px;top:691px;width:196px;height:37px;background:#e1e9f7;"></div>
<div class="t " style="left:146.5px;top:701.0px;font-size:14.5px;line-height:20px;color:#0b57d0;letter-spacing:0.106px;font-weight:bold;">Directory Submission</div>
<svg class="b" style="left:310px;top:709px;" width="8" height="4.5" viewBox="0 0 8 4.5"><path d="M0 0 H8 L4 4.5Z" fill="#0b57d0"/></svg>
<div class="t " style="left:343px;top:701.0px;font-size:14.5px;line-height:20px;color:#444746;letter-spacing:-0.136px;-webkit-text-stroke:0.25px #444746;">PING SUBMISSION BACKLINK</div>
<svg class="b" style="left:557px;top:709px;" width="8" height="4.5" viewBox="0 0 8 4.5"><path d="M0 0 H8 L4 4.5Z" fill="#444746"/></svg>
<div class="t " style="left:590.5px;top:701.0px;font-size:14.5px;line-height:20px;color:#444746;letter-spacing:-0.034px;-webkit-text-stroke:0.25px #444746;">BLOG COMMENT BACKLINK</div>
<svg class="b" style="left:795.5px;top:709px;" width="8" height="4.5" viewBox="0 0 8 4.5"><path d="M0 0 H8 L4 4.5Z" fill="#444746"/></svg>
<div class="t " style="left:829px;top:701.0px;font-size:14.5px;line-height:20px;color:#444746;letter-spacing:-0.255px;-webkit-text-stroke:0.25px #444746;">RSS BACKLINK</div>
<svg class="b" style="left:943.5px;top:709px;" width="8" height="4.5" viewBox="0 0 8 4.5"><path d="M0 0 H8 L4 4.5Z" fill="#444746"/></svg>
<div class="b" style="left:976px;top:691px;width:158px;height:37px;overflow:hidden;"><div class="t " style="left:0px;top:10.0px;font-size:14.5px;line-height:20px;color:#444746;letter-spacing:-0.222px;-webkit-text-stroke:0.25px #444746;">IMAGE SUBMISSION BACKLINK</div></div>
<div class="b" style="left:1134px;top:700px;width:1px;height:20px;background:#5f6368;"></div>
<svg class="b" style="left:1154px;top:706px;" width="7" height="10" viewBox="0 0 7 10"><path d="M6 0.7 L1.3 5 L6 9.3" stroke="#c4c7c5" stroke-width="1.5" fill="none"/></svg>
<svg class="b" style="left:1194px;top:706px;" width="7" height="10" viewBox="0 0 7 10"><path d="M1 0.7 L5.7 5 L1 9.3" stroke="#444746" stroke-width="1.6" fill="none"/></svg>
<svg class="b" style="left:1335px;top:706px;" width="7" height="10" viewBox="0 0 7 10"><path d="M6 0.7 L1.3 5 L6 9.3" stroke="#444746" stroke-width="1.6" fill="none"/></svg>
<!-- p_taskbar -->
<div class="b" style="left:0px;top:728px;width:1366px;height:40px;background:#1c1c1e;"></div>
<svg class="b" style="left:16px;top:740px;" width="16" height="16" viewBox="0 0 16 16"><path d="M0 2.3 L6.6 1.3 V7.6 H0Z M7.6 1.15 L16 0 V7.6 H7.6Z M0 8.5 H6.6 V14.8 L0 13.8Z M7.6 8.5 H16 V16 L7.6 14.9Z" fill="#fff"/></svg>
<div class="b" style="left:48px;top:728px;width:288px;height:40px;background:#f3f3f3;border-top:1px solid #b9b9b9;"></div>
<svg class="b" style="left:59px;top:739px;" width="18" height="18" viewBox="0 0 18 18"><circle cx="11.3" cy="6.7" r="5.3" stroke="#1f1f1f" stroke-width="1.3" fill="none"/><path d="M7.6 10.6 L1 17" stroke="#1f1f1f" stroke-width="1.4"/></svg>
<div class="t " style="left:88.5px;top:738.0px;font-size:15px;line-height:21px;color:#2b2b2b;letter-spacing:-0.293px;">Type here to search</div>
<svg class="b" style="left:250px;top:726px;" width="86" height="42" viewBox="0 0 86 42"><defs><linearGradient id="cg" x1="0" y1="0" x2="0.3" y2="1"><stop offset="0" stop-color="#1f5a3c"/><stop offset="0.5" stop-color="#2f8a55"/><stop offset="1" stop-color="#1d6b52"/></linearGradient><linearGradient id="sg" x1="0" y1="0" x2="1" y2="1"><stop offset="0" stop-color="#cfcda4"/><stop offset="1" stop-color="#b6b78c"/></linearGradient><clipPath id="cc"><rect x="0" y="2.6" width="85.6" height="39.4"/></clipPath></defs>
<g clip-path="url(#cc)">
<path d="M14.5 29 C15.5 24.5 18.5 21.5 20.8 22 L22.5 25.5 L19 30Z" fill="#f0c6a2"/>
<path d="M9.5 42 C11 33.5 16 27 22 22.5 C27 19 32 17.2 36 16.8 L43.5 12.6 L46.8 11 L49 12.2 L54.8 12.2 L54.6 13.6 L49 17.6 L44 21 L41.6 22.4 L40.6 26 L42 29.4 L39.4 29.8 L38.2 26.5 L36 25 L31 26.6 L28.6 28 L30.6 32.4 L33 33.6 L31.6 34.6 L27.4 32 L26.4 29.4 L24.6 31 L24.4 36 L26 42 L21.4 42 L21.6 33.6 C18.5 35 16.8 38.5 16.2 42Z" fill="url(#cg)"/>
<path d="M54.7 13.2 L49 17.6 L43.4 21.4 L42 20.6 L46.4 16.4 L50.4 13.6Z" fill="#c4ccc6"/>
<path d="M13 42 C14.5 36 18.5 31.6 22 30.4 L21.6 33.6 C18.5 35 16.8 38.5 16.2 42Z" fill="#b7c3bc"/>
<path d="M45 24.6 L56 20.4 L61.5 23 L67 25 L73 23.6 C74.5 28 75 35 75 42 L51 42 L52.4 37.6 L49.6 31.4 L46 30.4Z" fill="url(#sg)"/>
<path d="M28.6 28.6 L31 27 L35.4 25 L37 19 L36 16.4 L38 16 L39.4 19.4 L39.6 24 L41 27.4 L46 29 L46 30.4 L42.4 31.2 L37.6 31 L39 33.4 L52.4 41 L51.6 42 L45 42 L35 33.6 L33.2 31.4 L30 31.2Z" fill="#f0c6a2"/>
<path d="M38 25.6 L40.4 25.2 L41.6 29.6 L39.4 30Z" fill="#1f6b4c"/>
<path d="M62 22 L70 19 L73 23.8 L67 25.4 L61.6 23.2Z" fill="#eec3a2"/>
<path d="M59 13 C58.6 10 60 7.4 63.4 6.6 L69 7.6 L72 14 L70.6 20.6 L66 23.4 L62.4 23.4 L61.6 21 L59.6 20 L59.2 18.6 L58.4 17.6 L59.2 15.6 L58.4 14.4Z" fill="#f3ceb0"/>
<path d="M58.4 16.6 L60.2 16.2 L60 18.8 L58.8 18.8Z" fill="#e0525a"/>
<path d="M63.4 6.8 C65 3.6 71 3 74.6 5.6 C78.6 8.6 79.4 14.6 77.6 18.6 C76.6 21.6 74.6 23.6 72.8 23.6 C72.2 21 71.4 18.6 71.2 16 C71 13.6 69.6 13 69.4 11 C67.6 9 65 8.6 63.4 6.8Z" fill="#d2c089"/>
<path d="M70 12 C71 12.6 71.6 14.6 71 16.4 C70.2 15.4 69.8 13.6 70 12Z" fill="#e8b996"/>
</g></svg>
<svg class="b" style="left:351px;top:739px;" width="18" height="16" viewBox="0 0 18 16"><rect x="2.8" y="3" width="9.5" height="9.5" stroke="#fff" stroke-width="1.3" fill="none"/><path d="M0.6 1 H12 M0.6 14.6 H12 M0.6 1 V2.4 M0.6 14.6 V13.2" stroke="#fff" stroke-width="1.2" fill="none"/><path d="M15.6 1 V5 M15.6 8.4 V15" stroke="#fff" stroke-width="1.6"/><rect x="14.6" y="5.4" width="2.2" height="2.6" fill="#fff"/></svg>
<svg class="b" style="left:398px;top:735px;" width="25" height="25" viewBox="0 0 25 25"><defs><linearGradient id="eg1" x1="0" y1="0" x2="1" y2="1"><stop offset="0" stop-color="#35c1f1"/><stop offset="1" stop-color="#0c59a4"/></linearGradient><linearGradient id="eg2" x1="0" y1="0" x2="1" y2="0"><stop offset="0" stop-color="#2bc3d2"/><stop offset="1" stop-color="#7bd84a"/></linearGradient></defs><circle cx="12.5" cy="12.5" r="12" fill="url(#eg1)"/><path d="M1 10 C3 2 12 -1 19 2.5 C24 5 25.5 10 24 14 C22.5 17 18 17.5 16 15.5 C18 13 16.5 9.5 12.5 9 C7 8.5 3 12 2.5 17 C1 15 0.5 12.5 1 10Z" fill="url(#eg2)"/><path d="M9 13 C8 18 11.5 22.5 17 22.5 C19.5 22.5 22 21.5 23 20 C20 25 12 26 7.5 22 C4 19 4.5 14 9 13Z" fill="#1b4f9c"/></svg>
<svg class="b" style="left:447px;top:736px;" width="25" height="23" viewBox="0 0 25 23"><path d="M0 8 L12.5 0 L25 8 V23 H0Z" fill="#1683d8"/><path d="M0 8 L12.5 16.5 L25 8 V23 H0Z" fill="#35b6f2"/><path d="M0 23 L12.5 12.5 L25 23Z" fill="#1ea2ea"/><path d="M0 8 L12.5 16.5 L25 8 L12.5 1.2Z" fill="#0f6cbd" opacity="0.9"/><path d="M1.5 8.5 L12.5 16 L23.5 8.5" stroke="#bfe6fb" stroke-width="1.2" fill="none"/></svg>
<svg class="b" style="left:497px;top:735px;" width="24" height="25" viewBox="0 0 24 25"><defs><radialGradient id="ff1" cx="0.6" cy="0.2" r="0.9"><stop offset="0" stop-color="#fff36a"/><stop offset="0.35" stop-color="#ffa21e"/><stop offset="0.75" stop-color="#ff3f4a"/><stop offset="1" stop-color="#d4136f"/></radialGradient></defs><path d="M12 2 C14 3 15 1 15.5 0 C19 3 20 6 20.5 8 C22 8.5 23.5 11 23.5 14 C23.5 20 18.5 24.5 12 24.5 C5.5 24.5 0.5 20 0.5 14 C0.5 10 2 7 4 5.5 C4 7 4.5 8 5.5 8.5 C6 5.5 9 3 12 2Z" fill="url(#ff1)"/><circle cx="12.5" cy="14" r="5.6" fill="#7a3ed6"/><path d="M6.5 12 C8 9.5 11 9 13 10.5 C11 10.5 9.8 11.6 10 13 C7.5 13.5 6.8 12.8 6.5 12Z" fill="#ffbd4f"/><path d="M7 15 C9 19 14 19.5 18 17 C16 21 9 21.5 7 15Z" fill="#ff6a3d"/></svg>
<svg class="b" style="left:545px;top:736px;" width="25" height="24" viewBox="0 0 25 24"><path d="M7.5 6 V3.5 Q7.5 1 10 1 H15 Q17.5 1 17.5 3.5 V6" stroke="#2aa7e8" stroke-width="1.8" fill="none"/><path d="M0.5 6 H24.5 V20.5 Q24.5 23.5 21.5 23.5 H3.5 Q0.5 23.5 0.5 20.5Z" fill="#f4f4f4"/><rect x="7.6" y="9.6" width="4.3" height="4.3" fill="#f25022"/><rect x="13" y="9.6" width="4.3" height="4.3" fill="#7fba00"/><rect x="7.6" y="15" width="4.3" height="4.3" fill="#00a4ef"/><rect x="13" y="15" width="4.3" height="4.3" fill="#ffb900"/></svg>
<svg class="b" style="left:595px;top:738px;" width="24" height="20" viewBox="0 0 24 20"><path d="M8.2 0 H15.8 L24 14 H16.4Z" fill="#fbbc04"/><path d="M8.2 0 L12 6.5 L4.1 20 L0 13.5Z" fill="#1fa463"/><path d="M7.9 13.5 H24 L20 20 H4.1Z" fill="#4285f4"/><path d="M16.4 14 L24 14 L20 20 Z" fill="#ea4335"/><path d="M8.2 0 H15.8 L12 6.5Z" fill="#188038"/></svg>
<svg class="b" style="left:644px;top:736px;" width="24" height="23" viewBox="0 0 24 23"><rect x="11" y="2" width="12.5" height="19" fill="#fff"/><path d="M13.5 5 H21.5 M13.5 7.5 H21.5 M13.5 10 H21.5 M13.5 12.5 H21.5 M13.5 15 H21.5 M13.5 17.5 H21.5" stroke="#2b579a" stroke-width="1.1"/><path d="M0 2.5 L14 0 V23 L0 20.5Z" fill="#2b579a"/><path d="M2.8 7.5 L4.6 15.5 L6.8 9 L9 15.5 L10.8 7.5" stroke="#fff" stroke-width="1.5" fill="none"/></svg>
<div class="b" style="left:637px;top:766px;width:39px;height:2px;background:#b4f0dc;"></div>
<svg class="b" style="left:693px;top:738px;" width="23" height="20" viewBox="0 0 23 20"><path d="M0 1.5 Q0 0 1.5 0 H8 L10 2.5 H21.5 Q23 2.5 23 4 V18 H0Z" fill="#e8a928"/><rect x="0" y="4.5" width="23" height="14" rx="1" fill="#ffd766"/><path d="M4.5 19.5 V12 H18.5 V19.5 H14.5 V15.5 H8.5 V19.5Z" fill="#3a96dd"/></svg>
<svg class="b" style="left:742px;top:735px;" width="24" height="24" viewBox="0 0 24 24"><ellipse cx="12" cy="12" rx="11.3" ry="11.8" fill="#e0162b"/><ellipse cx="12" cy="12" rx="4.6" ry="8.2" fill="#1c1c1e"/><path d="M16 2 C21 4 23 8 23.3 12 C23 16 21 20 16 22 C19 19 19.5 15 19.5 12 C19.5 9 19 5 16 2Z" fill="#a70f20"/></svg>
<svg class="b" style="left:841px;top:737px;" width="22" height="21" viewBox="0 0 22 21"><rect width="22" height="21" rx="3.5" fill="#b30b00"/><path d="M4.5 16.5 C6.5 15 9 11 10.3 6 C10.8 4 9.2 3.6 9.2 5.4 C9.2 8.5 13 13 17.8 13.6 C19.2 13.7 18.8 12.5 17 12.5 C13 12.5 7 14.5 4.5 16.5Z" stroke="#fff" stroke-width="1.4" fill="none" stroke-linejoin="round"/></svg>
<div class="b" style="left:832px;top:766px;width:40px;height:2px;background:#b4f0dc;"></div>
<svg class="b" style="left:889px;top:735px;" width="28" height="28" viewBox="0 0 28 28"><circle cx="12" cy="12" r="12" fill="#db4437"/><path d="M12 12 L1.6 6 A12 12 0 0 0 12 24 L17.2 15Z" fill="#0f9d58"/><path d="M12 12 L17.2 15 L12 24 A12 12 0 0 0 22.4 6 H12Z" fill="#ffcd40"/><circle cx="12" cy="12" r="5.6" fill="#fff"/><circle cx="12" cy="12" r="4.4" fill="#4285f4"/><circle cx="17" cy="19" r="7" fill="#5a4a55"/><path d="M13 22 C14 17 20 17 21 22 C19 26 15 26 13 22Z" fill="#d81b60"/><circle cx="17" cy="16" r="2.2" fill="#3a2a22"/></svg>
<div class="b" style="left:881px;top:766px;width:40px;height:2px;background:#b4f0dc;"></div>
<div class="b" style="left:926px;top:728px;width:48px;height:40px;background:#4b4b4d;"></div>
<svg class="b" style="left:938px;top:735px;" width="28" height="28" viewBox="0 0 28 28"><circle cx="12" cy="12" r="12" fill="#db4437"/><path d="M12 12 L1.6 6 A12 12 0 0 0 12 24 L17.2 15Z" fill="#0f9d58"/><path d="M12 12 L17.2 15 L12 24 A12 12 0 0 0 22.4 6 H12Z" fill="#ffcd40"/><circle cx="12" cy="12" r="5.6" fill="#fff"/><circle cx="12" cy="12" r="4.4" fill="#4285f4"/><circle cx="17" cy="19" r="7" fill="#6d6553"/><path d="M13 22 C14 17 20 17 21 22 C19 26 15 26 13 22Z" fill="#8b7a66"/><circle cx="17" cy="16" r="2.2" fill="#3a2a22"/></svg>
<div class="b" style="left:926px;top:766px;width:48px;height:2px;background:#b4f0dc;"></div>
<svg class="b" style="left:1076px;top:738px;" width="26" height="24" viewBox="0 0 26 24"><defs><linearGradient id="wg" x1="0" y1="0" x2="0.6" y2="1"><stop offset="0" stop-color="#ffc928"/><stop offset="1" stop-color="#f47b16"/></linearGradient></defs><circle cx="10.5" cy="12" r="10.3" fill="url(#wg)"/><circle cx="18.5" cy="5.2" r="5.2" fill="#d0242b"/></svg>
<div class="t " style="left:1092.4px;top:736.7px;font-size:9px;line-height:13px;color:#fff;">1</div>
<div class="t " style="left:1106px;top:737.3px;font-size:14.5px;line-height:20px;color:#fff;letter-spacing:-0.821px;">66°F</div>
<svg class="b" style="left:1158px;top:744px;" width="13" height="8" viewBox="0 0 13 8"><path d="M0.6 7.2 L6.5 1 L12.4 7.2" stroke="#fff" stroke-width="1.3" fill="none"/></svg>
<svg class="b" style="left:1181px;top:739px;" width="16" height="18" viewBox="0 0 16 18"><path d="M0.8 17 C1 10 6 3 15 0.5 C15.5 8 10 14 3 15 Z" fill="#a974e0"/><path d="M0.8 17 C4 11 9 6 14.5 1.5" stroke="#6e3fb0" stroke-width="0.9" fill="none"/><path d="M3 15 C7 14.5 12.5 10 15 0.5 C12 6 8 11 3 15Z" fill="#8c55cc"/></svg>
<svg class="b" style="left:1205px;top:741px;" width="17" height="15" viewBox="0 0 17 15"><rect x="3.6" y="0.6" width="12.6" height="9" stroke="#fff" stroke-width="1.2" fill="none"/><path d="M9.9 9.6 V13.4 M5.5 13.6 H14.3" stroke="#fff" stroke-width="1.2"/><rect x="0.6" y="1.6" width="4.4" height="4" stroke="#fff" stroke-width="1" fill="#1c1c1e"/><path d="M2.8 5.6 V13.6 H6" stroke="#fff" stroke-width="1" fill="none"/></svg>
<svg class="b" style="left:1231px;top:739px;" width="13" height="18" viewBox="0 0 13 18"><rect x="0.7" y="5.2" width="8" height="7.6" rx="1.6" stroke="#fff" stroke-width="1.2" fill="none"/><path d="M8.7 8 L12 5.8 V12.2 L8.7 10" stroke="#fff" stroke-width="1.1" fill="none"/><path d="M2.2 2.6 C4.5 0.6 7.5 0.6 9.8 2.6 M2.2 15.4 C4.5 17.4 7.5 17.4 9.8 15.4" stroke="#fff" stroke-width="1.1" fill="none"/></svg>
<div class="t " style="left:1259px;top:731.1px;font-size:12px;line-height:17px;color:#fff;letter-spacing:-0.147px;">8:01 AM</div>
<div class="t " style="left:1253px;top:748.7px;font-size:12px;line-height:17px;color:#fff;letter-spacing:-0.267px;">11/15/2023</div>
<svg class="b" style="left:1324px;top:740px;" width="17" height="16" viewBox="0 0 17 16"><path d="M0.7 0.7 H16.3 V12 H11 L8.5 14.6 L6 12 H0.7Z" stroke="#fff" stroke-width="1.2" fill="none" stroke-linejoin="miter"/></svg>
<div class="b" style="left:1361px;top:728px;width:1px;height:40px;background:#5a5a5a;"></div>
</body></html>
